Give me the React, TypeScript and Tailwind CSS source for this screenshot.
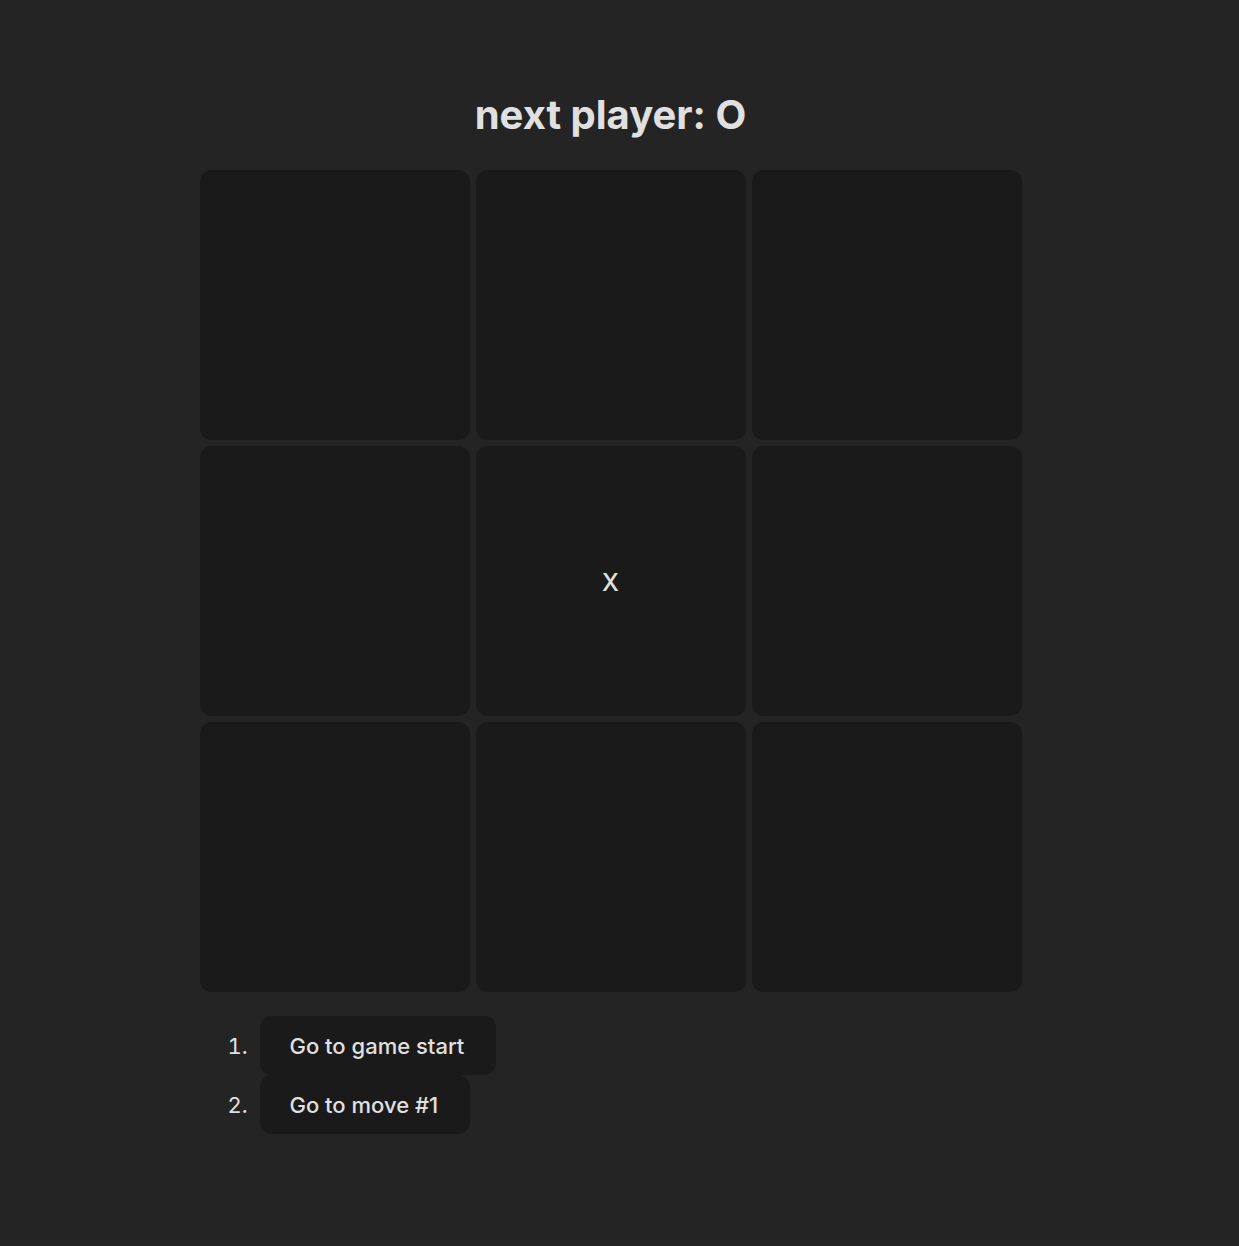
import { useState } from "react";

type Mark = "X" | "O" | null;

const EMPTY: Mark[] = Array(9).fill(null);
const OPENING: Mark[] = EMPTY.map((_, i) => (i === 4 ? "X" : null));
const LINES = [
  [0, 1, 2], [3, 4, 5], [6, 7, 8],
  [0, 3, 6], [1, 4, 7], [2, 5, 8],
  [0, 4, 8], [2, 4, 6],
];

function findWinner(squares: Mark[]): Mark {
  for (const [a, b, c] of LINES) {
    if (squares[a] && squares[a] === squares[b] && squares[a] === squares[c]) return squares[a];
  }
  return null;
}

function Square({ value, index, onPlay }: { value: Mark; index: number; onPlay: () => void }) {
  return (
    <button
      type="button"
      aria-label={value ? undefined : `Square ${index + 1}`}
      onClick={onPlay}
      className="flex aspect-square items-center justify-center rounded-xl bg-[#1a1a1a] pt-1 text-2xl font-medium"
    >
      {value}
    </button>
  );
}

export default function App() {
  const [history, setHistory] = useState<Mark[][]>([EMPTY, OPENING]);
  const [move, setMove] = useState(1);
  const squares = history[move];
  const next = move % 2 === 0 ? "X" : "O";
  const winner = findWinner(squares);

  function play(i: number) {
    if (squares[i] || winner) return;
    const updated = squares.slice();
    updated[i] = next;
    setHistory([...history.slice(0, move + 1), updated]);
    setMove(move + 1);
  }

  return (
    <div className="min-h-screen bg-[#242424] py-20 pr-[18px] font-['Inter',sans-serif] text-[#e0e0e0]">
      <main className="mx-auto w-full max-w-[822px]">
        <h1 className="text-center text-[40px] leading-[70px] font-bold">
          {winner ? `winner: ${winner}` : `next player: ${next}`}
        </h1>
        <div className="mt-5 grid grid-cols-3 gap-1.5">
          {squares.map((value, i) => (
            <Square key={i} index={i} value={value} onPlay={() => play(i)} />
          ))}
        </div>
        <ol className="mt-6 list-decimal pl-[54px] text-[22px]">
          {history.map((_, i) => (
            <li key={i}>
              <button
                type="button"
                onClick={() => setMove(i)}
                className="ml-1.5 rounded-xl bg-[#1a1a1a] pt-[14px] pr-8 pb-[13px] pl-[30px] text-[22px] leading-8 font-medium"
              >
                {i === 0 ? "Go to game start" : `Go to move #${i}`}
              </button>
            </li>
          ))}
        </ol>
      </main>
    </div>
  );
}
